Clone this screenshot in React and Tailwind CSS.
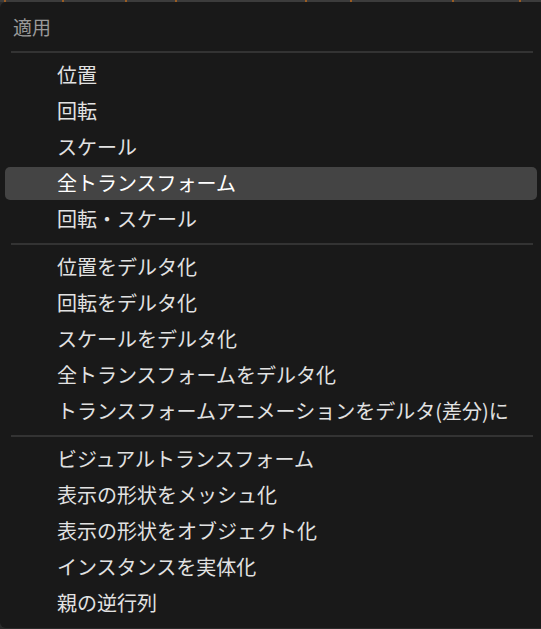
export default function App() {
  const groups = [
    ["位置", "回転", "スケール", "全トランスフォーム", "回転・スケール"],
    [
      "位置をデルタ化",
      "回転をデルタ化",
      "スケールをデルタ化",
      "全トランスフォームをデルタ化",
      "トランスフォームアニメーションをデルタ(差分)に",
    ],
    [
      "ビジュアルトランスフォーム",
      "表示の形状をメッシュ化",
      "表示の形状をオブジェクト化",
      "インスタンスを実体化",
      "親の逆行列",
    ],
  ];
  const active = "全トランスフォーム";
  const dots = [4, 62, 125, 175, 305, 350, 452, 519];

  return (
    <div
      className="w-[541px] h-[629px] overflow-hidden bg-[#2a2a2a]"
      style={{ fontFamily: '"Noto Sans CJK JP", "Noto Sans", sans-serif' }}
    >
      <div className="flex h-[2px] bg-[#3c3c3c]">
        {dots.map((x, i) => (
          <span key={i} className="h-[2px] w-[2px] bg-[#9a5c22]" style={{ marginLeft: i === 0 ? x : x - dots[i - 1] - 2 }} />
        ))}
      </div>
      <div className="w-[545px] h-[626px] rounded-[6px] bg-[#191919] pt-[7px] pb-[8px]">
        <div className="h-[36px] flex items-center pl-[13px] text-[19px] text-[#9a9a9a]">適用</div>
        {groups.map((items, gi) => (
          <div key={gi}>
            <div className="mt-[6px] mb-[4px] ml-[11px] mr-[12px] h-[2px] bg-[#333333]" />
            {items.map((label) => (
              <div key={label} className="h-[36px] pl-[5px] pr-[8px] py-[1.5px]">
                <div
                  className={
                    "h-full flex items-center pl-[52px] rounded-[5px] text-[20px] leading-none " +
                    (label === active ? "bg-[#444444] text-white" : "text-[#e2e2e2]")
                  }
                >
                  {label}
                </div>
              </div>
            ))}
          </div>
        ))}
      </div>
    </div>
  );
}
